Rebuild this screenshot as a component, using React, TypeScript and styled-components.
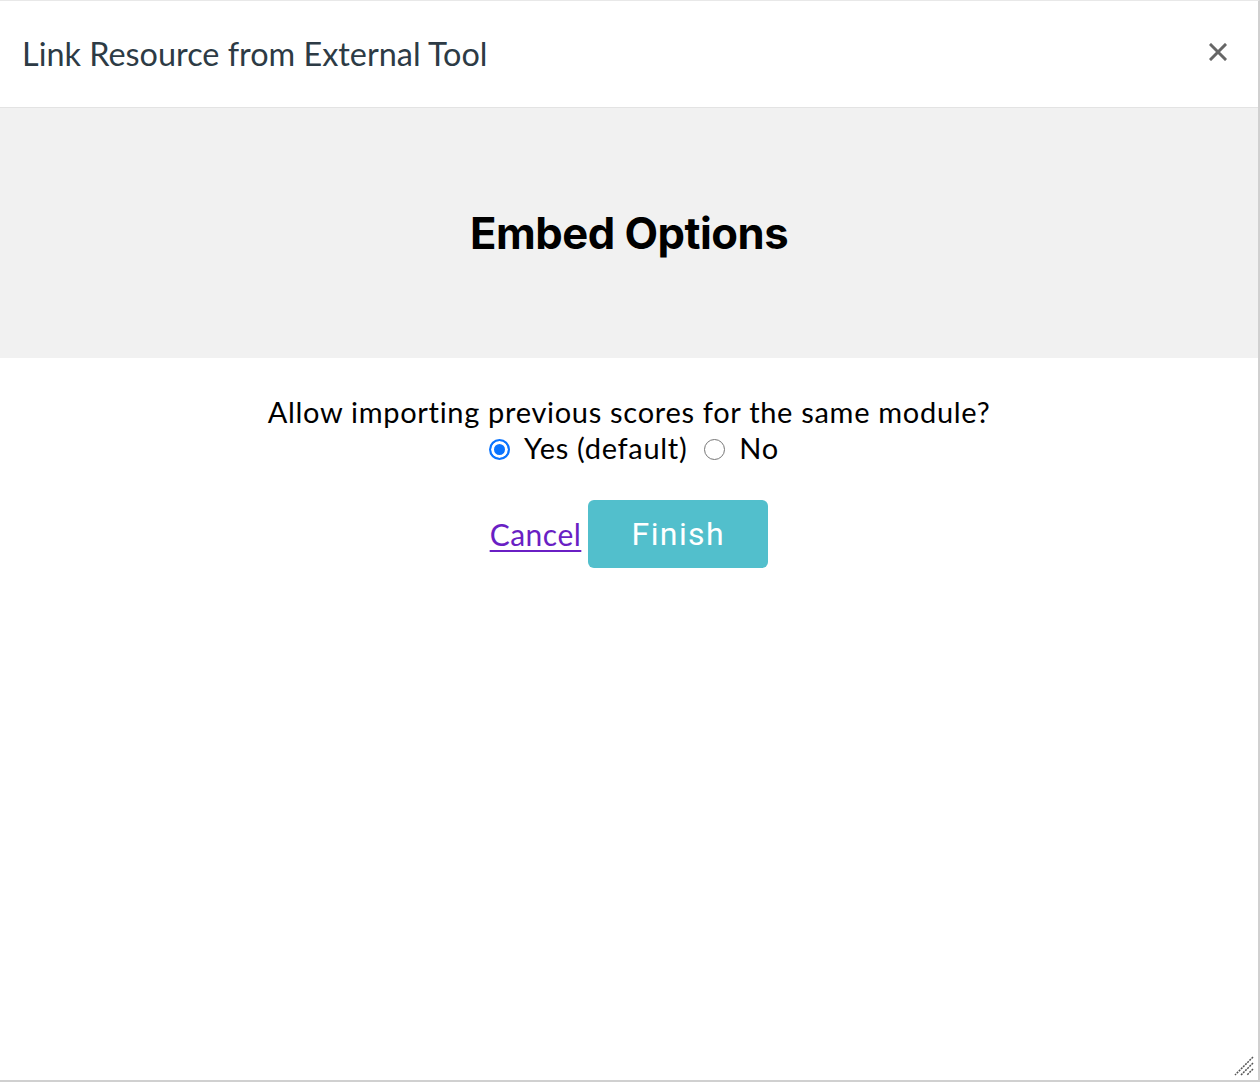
import React, { useState } from 'react';
import styled, { createGlobalStyle } from 'styled-components';

const GlobalStyle = createGlobalStyle`
  html, body {
    margin: 0;
    padding: 0;
    background: #ffffff;
  }
`;

const Frame = styled.div`
  box-sizing: border-box;
  position: relative;
  display: flex;
  flex-direction: column;
  width: 1260px;
  height: 1082px;
  border-top: 1px solid #e8e8e8;
  border-right: 2px solid #d0d0d0;
  border-bottom: 2px solid #d0d0d0;
  background: #ffffff;
`;

const Header = styled.header`
  box-sizing: border-box;
  display: flex;
  align-items: center;
  justify-content: space-between;
  flex: none;
  height: 107px;
  padding: 0 30px 0 22px;
  border-bottom: 1px solid #e3e3e3;
`;

const Title = styled.h2`
  margin: 0;
  color: #2d3b45;
  font-family: Lato, 'Open Sans', sans-serif;
  font-size: 32.4px;
  font-weight: 400;
  line-height: 1;
`;

const CloseButton = styled.button`
  display: flex;
  align-items: center;
  justify-content: center;
  margin: -4px 0 0 0;
  border: 0;
  background: transparent;
  padding: 0;
  width: 20px;
  height: 20px;
  cursor: pointer;
`;

const Banner = styled.div`
  display: flex;
  align-items: center;
  justify-content: center;
  flex: none;
  height: 250px;
  background: #f1f1f1;
`;

const Heading = styled.h1`
  margin: 0;
  color: #000000;
  font-family: Inter, Roboto, sans-serif;
  font-size: 43.6px;
  font-weight: 700;
  letter-spacing: -0.5px;
`;

const Body = styled.div`
  display: flex;
  flex-direction: column;
  align-items: center;
  padding-top: 36px;
  color: #000000;
  font-family: Lato, 'Open Sans', sans-serif;
  font-size: 29px;
  letter-spacing: 0.7px;
`;

const Question = styled.p`
  margin: 0;
  line-height: 36px;
`;

const Choices = styled.div`
  display: flex;
  align-items: center;
  padding-left: 10px;
  line-height: 36px;
`;

const Choice = styled.label`
  display: flex;
  align-items: center;
  margin-right: 17px;
  cursor: pointer;

  &:last-child {
    margin-right: 0;
  }
`;

const Radio = styled.input.attrs({ type: 'radio' })`
  appearance: none;
  box-sizing: border-box;
  margin: 0 14px -2px 0;
  border: 1px solid #767676;
  border-radius: 50%;
  background: #ffffff;
  width: 21px;
  height: 21px;

  &:checked {
    border: 2px solid #0a74ff;
    box-shadow: inset 0 0 0 3px #ffffff;
    background: #0a74ff;
  }
`;

const Actions = styled.div`
  display: flex;
  align-items: center;
  gap: 7px;
  margin-top: 34px;
`;

const CancelLink = styled.a`
  color: #6a1fc4;
  font-family: Lato, 'Open Sans', sans-serif;
  font-size: 30px;
  letter-spacing: 0.5px;
  text-decoration: underline;
  text-underline-offset: 4px;
  text-decoration-thickness: 2px;
`;

const FinishButton = styled.button`
  border: 0;
  border-radius: 6px;
  background: #52bfcc;
  width: 180px;
  height: 68px;
  color: #ffffff;
  font-family: Roboto, sans-serif;
  font-size: 32px;
  font-weight: 400;
  letter-spacing: 1.4px;
  cursor: pointer;
`;

const ResizeGrip = styled.svg`
  position: absolute;
  right: 3px;
  bottom: 3px;
`;

export default function App() {
  const [allow, setAllow] = useState('yes');

  return (
    <>
      <GlobalStyle />
      <Frame>
        <Header>
          <Title>Link Resource from External Tool</Title>
          <CloseButton aria-label='Close'>
            <svg width='18' height='18' viewBox='0 0 18 18'>
              <path d='M2 2L16 16M16 2L2 16' stroke='#666666' strokeWidth='3' strokeLinecap='square' />
            </svg>
          </CloseButton>
        </Header>
        <Banner>
          <Heading>Embed Options</Heading>
        </Banner>
        <Body>
          <Question>Allow importing previous scores for the same module?</Question>
          <Choices>
            <Choice>
              <Radio name='allow' checked={allow === 'yes'} onChange={() => setAllow('yes')} />
              Yes (default)
            </Choice>
            <Choice>
              <Radio name='allow' checked={allow === 'no'} onChange={() => setAllow('no')} />
              No
            </Choice>
          </Choices>
          <Actions>
            <CancelLink href='#'>Cancel</CancelLink>
            <FinishButton>Finish</FinishButton>
          </Actions>
        </Body>
        <ResizeGrip width='22' height='22' viewBox='0 0 22 22'>
          <path d='M20 2L2 20M20 8L8 20M20 14L14 20' stroke='#555555' strokeWidth='1.5' strokeDasharray='2 1' />
        </ResizeGrip>
      </Frame>
    </>
  );
}
